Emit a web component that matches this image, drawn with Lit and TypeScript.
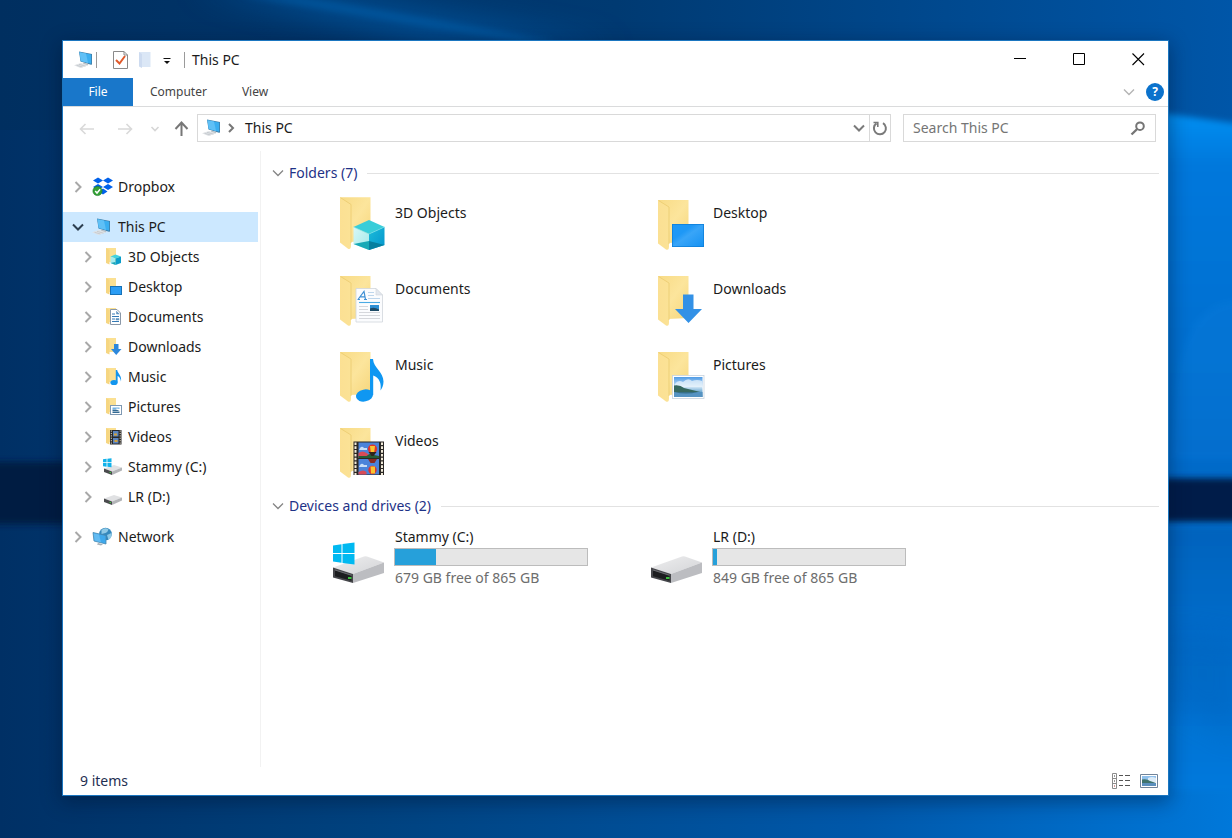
import { LitElement, html, css, svg } from "lit";
import { customElement, property, state } from "lit/decorators.js";
import { classMap } from "lit/directives/class-map.js";

type IconName =
  | "objects" | "desktop" | "documents" | "downloads" | "music"
  | "pictures" | "videos" | "drive-c" | "drive" | "pc" | "dropbox" | "network";

interface NavItem { label: string; icon: IconName; child?: boolean; open?: boolean; spaced?: boolean; }
interface Drive { label: string; icon: IconName; free: number; total: number; }

const navItems: NavItem[] = [
  { label: "Dropbox", icon: "dropbox" },
  { label: "This PC", icon: "pc", open: true, spaced: true },
  { label: "3D Objects", icon: "objects", child: true },
  { label: "Desktop", icon: "desktop", child: true },
  { label: "Documents", icon: "documents", child: true },
  { label: "Downloads", icon: "downloads", child: true },
  { label: "Music", icon: "music", child: true },
  { label: "Pictures", icon: "pictures", child: true },
  { label: "Videos", icon: "videos", child: true },
  { label: "Stammy (C:)", icon: "drive-c", child: true },
  { label: "LR (D:)", icon: "drive", child: true },
  { label: "Network", icon: "network", spaced: true },
];

const folders: { label: string; icon: IconName }[] = [
  { label: "3D Objects", icon: "objects" },
  { label: "Desktop", icon: "desktop" },
  { label: "Documents", icon: "documents" },
  { label: "Downloads", icon: "downloads" },
  { label: "Music", icon: "music" },
  { label: "Pictures", icon: "pictures" },
  { label: "Videos", icon: "videos" },
];

const drives: Drive[] = [
  { label: "Stammy (C:)", icon: "drive-c", free: 679, total: 865 },
  { label: "LR (D:)", icon: "drive", free: 849, total: 865 },
];

const gradients = svg`
  <defs>
    <linearGradient id="back" x1="0" y1="0" x2="1" y2="1">
      <stop offset="0" stop-color="#f8db86"></stop><stop offset=".5" stop-color="#fce59c"></stop><stop offset="1" stop-color="#f6d67c"></stop>
    </linearGradient>
    <linearGradient id="flap" x1="0" y1="0" x2="1" y2="0">
      <stop offset="0" stop-color="#fbe093"></stop><stop offset="1" stop-color="#fbe296"></stop>
    </linearGradient>
    <linearGradient id="blue" x1="0" y1="0" x2="1" y2="1">
      <stop offset="0" stop-color="#1e98f6"></stop><stop offset=".35" stop-color="#1e98f6"></stop>
      <stop offset=".5" stop-color="#39a5f8"></stop><stop offset="1" stop-color="#1491f2"></stop>
    </linearGradient>
    <linearGradient id="sky" x1="0" y1="0" x2="0" y2="1">
      <stop offset="0" stop-color="#4f9be6"></stop><stop offset=".5" stop-color="#cfe5f6"></stop>
      <stop offset=".7" stop-color="#7fb4d8"></stop><stop offset="1" stop-color="#2f6fa3"></stop>
    </linearGradient>
    <linearGradient id="lid" x1="0" y1="0" x2="1" y2="1">
      <stop offset="0" stop-color="#eeeeef"></stop><stop offset="1" stop-color="#d3d4d7"></stop>
    </linearGradient>
    <linearGradient id="cubeL" x1="0" y1="0" x2="1" y2="1">
      <stop offset="0" stop-color="#d9f8f6"></stop><stop offset="1" stop-color="#a2e9ea"></stop>
    </linearGradient>
    <linearGradient id="cubeR" x1="0" y1="0" x2="1" y2="1">
      <stop offset="0" stop-color="#1cbcd9"></stop><stop offset="1" stop-color="#0495cd"></stop>
    </linearGradient>
  </defs>`;

const folderShape = svg`
  <path d="M9 4H39.500V46L19 47Z" fill="url(#back)"></path>
  <path d="M9 4.500 20 11V50q0 5-3 3.500L9 47.500Z" fill="url(#flap)"></path>
  <path d="M9.500 4.500 20 11V48" stroke="#ebcb70" stroke-width=".8" fill="none"></path>`;

const cube = svg`
  <path d="M38 24 53.500 31 38 38 22.500 31Z" fill="#38cdd9"></path>
  <path d="M22.500 31 38 38V54L22.500 48Z" fill="url(#cubeL)"></path>
  <path d="M53.500 31 38 38V54L53.500 49Z" fill="url(#cubeR)"></path>
  <path d="M22.500 48 38 45V54Z" fill="#17a9b6"></path>
  <path d="M53.500 49 38 45V54Z" fill="#067f9f"></path>
  <path d="M22.500 31 38 38 53.500 31" fill="none" stroke="#7ae2e8" stroke-width=".6"></path>`;

const desk = svg`
  <rect x="23" y="28" width="32" height="23" fill="url(#blue)"></rect>
  <rect x="23.400" y="28.400" width="31.200" height="22.200" fill="none" stroke="#0f80da" stroke-width=".8"></rect>`;

const paper = svg`
  <path d="M25 16.500H45L51.500 23V50H25Z" fill="#fbfcfe" stroke="#d0d5dc" stroke-width=".8"></path>
  <path d="M45 16.500V23H51.500Z" fill="#e3e8ef" stroke="#d0d5dc" stroke-width=".6"></path>
  <path d="M27 27.500 33 19.500 34.500 27.500M29.500 24.800H34M26.500 27.500H29M33 27.500H36" fill="none" stroke="#3f90d4" stroke-width="1.200"></path>
  <path d="M37 20.500H43M37 23.500H43M37 26.500H49" stroke="#b7d1ea" stroke-width=".9"></path>
  <path d="M28 30.500H49" stroke="#4aaae4" stroke-width="1.100"></path>
  <path d="M28 34.500H37M28 37.500H37M28 40.500H49M28 43.500H49M28 46.500H49" stroke="#d0d3d8" stroke-width=".9"></path>
  <rect x="39" y="33" width="9" height="6" fill="#2c8fd4"></rect>
  <path d="M39 36.500q4-2 9 1V39H39Z" fill="#1d4a66"></path>`;

const arrow = svg`
  <path d="M34 22.500H44.500V37H53L39.500 51 26 37H34Z" fill="#3391e6"></path>`;

const note = svg`
  <ellipse cx="33.500" cy="47.500" rx="8.600" ry="6" transform="rotate(-12 33.500 47.500)" fill="#0f97f2"></ellipse>
  <path d="M39 11H42C42.500 20 52.500 24 52.500 33.500 52.500 37.500 51 40.500 49.500 42.500 50.500 35 48.500 30 42.200 27.500V47H39Z" fill="#0f97f2"></path>`;

const photo = svg`
  <rect x="23.500" y="27.500" width="31.500" height="23" fill="#fff" stroke="#c6d3df" stroke-width=".8"></rect>
  <rect x="25" y="29" width="28.500" height="20" fill="url(#sky)"></rect>
  <path d="M26 36q3-5 8-2 5-5 9-1 5-2 10 0v6H26Z" fill="#eef6fc" opacity=".7"></path>
  <path d="M25 37.500q6-1 10 2.500 8 2 18.500 4.500H25Z" fill="#35685f"></path>
  <path d="M25 44H53.500V49H25Z" fill="#5593c2"></path>
  <path d="M25 44q12 3 24 0Z" fill="#356f88"></path>`;

const film = svg`
  <rect x="22.500" y="17.500" width="30.500" height="33.500" fill="#2a2725"></rect>
  <path d="M24.500 18.500V51M51 18.500V51" stroke="#f1ead8" stroke-width="2" stroke-dasharray="2.600 1.200"></path>
  <rect x="27.500" y="18.500" width="20.500" height="15.500" fill="#4b83da"></rect>
  <rect x="27.500" y="35" width="20.500" height="15.500" fill="#4b83da"></rect>
  <path d="M27.500 29q4-3 8 0t5 2V34H27.500Z" fill="#d84b57"></path>
  <path d="M27.500 32h8l3-2 9.500 2v2H27.500Z" fill="#265c34"></path>
  <path d="M29 24q2-2.500 4 0h3v2h-8zM29 41q2-2.500 4 0h3v2h-8z" fill="#c8ddf7"></path>
  <circle cx="41.500" cy="25" r="4.600" fill="#e0342c"></circle>
  <path d="M39 22h5l-1 8h-3Z" fill="#f7c531"></path>
  <path d="M37.500 28h8l-3 4h-2Z" fill="#2e241c"></path>
  <path d="M37 35h9l-2.500 4h-4Z" fill="#8d2a21"></path>
  <path d="M27.500 48q5-3 8 0v2.500h-8Z" fill="#d84b57"></path>
  <circle cx="41.500" cy="46" r="4.200" fill="#e0342c"></circle>
  <path d="M39.500 42.500h4.500v7h-4Z" fill="#f7c531"></path>`;

const driveBody = svg`
  <path d="M2 27.500 33 16.500Q34.500 16 36 16.500L53 22.500 22 34Z" fill="url(#lid)"></path>
  <path d="M22 34 53 22.500V33L22 43Z" fill="#bcbdc1"></path>
  <path d="M2 27.500 22 34V43L2 37.500Z" fill="#45464a"></path>
  <path d="M4 30.200 20.500 35.500V40.800L4 36.200Z" fill="#1c1d1f"></path>
  <path d="M4 30 20.500 35.300" stroke="#77797d" stroke-width=".8"></path>
  <rect x="17" y="37" width="3.500" height="2" fill="#3cbf3f"></rect>`;

const winLogo = svg`
  <path d="M2 5.500 10.500 4.200V13H2ZM11.500 4 23.500 2.500V13H11.500ZM2 14H10.500V22.800L2 21.500ZM11.500 14H23.500V24.500L11.500 23Z" fill="#00b9f1"></path>`;

const large: Record<string, unknown> = {
  objects: svg`<g transform="translate(0 -3) scale(1 1.040)">${folderShape}</g>${cube}`,
  desktop: svg`${folderShape}${desk}`,
  documents: svg`${folderShape}${paper}`,
  downloads: svg`${folderShape}${arrow}`,
  music: svg`${folderShape}${note}`,
  pictures: svg`${folderShape}${photo}`,
  videos: svg`${folderShape}${film}`,
  "drive-c": svg`${driveBody}${winLogo}`,
  drive: driveBody,
};

const smallFolder = svg`
  <path d="M4 2H14V16H7Z" fill="#fbe092"></path>
  <path d="M4 2 7.500 4V18.500L4 17Z" fill="#f6d681"></path>`;
const smallDrive = svg`
  <path d="M2 12.500 12 9 20 11.500 10 15.500Z" fill="#e0e1e3"></path>
  <path d="M10 15.500 20 11.500V14.500L10 19Z" fill="#b3b5b8"></path>
  <path d="M2 12.500 10 15.500V19L2 16Z" fill="#4a4b4d"></path>
  <rect x="7.500" y="16" width="1.500" height="1" fill="#3ccf3f"></rect>`;

const small: Record<string, unknown> = {
  objects: svg`${smallFolder}
    <path d="M8.500 10.500 13.500 8.500 19 10.500 13.500 12.500Z" fill="#43d3df"></path>
    <path d="M8.500 10.500 13.500 12.500V19L8.500 17Z" fill="#a5ebee"></path>
    <path d="M19 10.500 13.500 12.500V19L19 17Z" fill="#0b9dca"></path>
    <path d="M8.500 17 13.500 16V19Z" fill="#18a5b8"></path>`,
  desktop: svg`${smallFolder}<rect x="8.500" y="10.500" width="11" height="8" fill="#2b9df4" stroke="#1672b8"></rect>`,
  documents: svg`${smallFolder}
    <path d="M8.500 3.500H15L18.500 7V18.500H8.500Z" fill="#fff" stroke="#8a98a8"></path>
    <path d="M10 8H13M10 10.500H17M10 13H13M10 15.500H17" stroke="#3479b5"></path>
    <path d="M14.500 5V8H17.500M14 12.500H17V14H14Z" fill="#5d91bf" stroke="#5d91bf" stroke-width=".5"></path>`,
  downloads: svg`${smallFolder}<path d="M12 8H16.500V13H19.500L14.200 19 9 13H12Z" fill="#2d88dc"></path>`,
  music: svg`${smallFolder}
    <ellipse cx="12" cy="16.500" rx="3.600" ry="2.600" fill="#1295ee"></ellipse>
    <path d="M13.800 4H15.200C15.500 7.500 20 9 19 15.500 18.500 12.500 17.500 11 15.600 10V16.500H13.800Z" fill="#1295ee"></path>`,
  pictures: svg`${smallFolder}
    <rect x="8.500" y="9.500" width="11" height="9" fill="#fff" stroke="#7e99b3"></rect>
    <path d="M10.500 11.500H17.500V13L15 12.500 10.500 14Z" fill="#6fb1e4"></path>
    <path d="M10.500 14q4-1.500 7 1H10.500ZM10.500 15.500h7V17h-7Z" fill="#326a94"></path>`,
  videos: svg`${smallFolder}
    <rect x="8" y="4" width="11.500" height="14.500" fill="#28282a"></rect>
    <path d="M9.300 4.500V18.500M18.200 4.500V18.500" stroke="#e8dfc8" stroke-dasharray="1.200 1.200"></path>
    <rect x="11" y="5" width="5.500" height="5.500" fill="#5a84c0"></rect>
    <rect x="11" y="12" width="5.500" height="5.500" fill="#5a84c0"></rect>
    <path d="M12 7.500h3v2h-3zM12.500 14h3v2h-3z" fill="#d4a13a"></path>`,
  "drive-c": svg`${smallDrive}
    <path d="M1 3.200 4.600 2.800V6.300H1ZM5.400 2.700 9.500 2.200V6.300H5.400ZM1 7.100H4.600V10.700L1 10.300ZM5.400 7.100H9.500V11.200L5.400 10.800Z" fill="#12b2ea"></path>`,
  drive: smallDrive,
  pc: svg`
    <path d="M5 2.500 18 5V15.500L17 15.800 6.500 12.500Z" fill="#3d7da8"></path>
    <path d="M5.500 3.200 17.200 5.500V14.700L6.800 12Z" fill="#3aaef0"></path>
    <path d="M5.500 3.200 12 4.500 14 13.900 6.800 12Z" fill="#5fc0f6"></path>
    <path d="M9.500 13.500 14.500 15 13.500 16.500 9 15Z" fill="#b9c0c6"></path>
    <path d="M0 16.300 7 14 14 16.300 6.500 19Z" fill="#dfe2e5"></path>
    <path d="M2.500 16.300 8.500 18M5 15.300 11.500 17.200" stroke="#c0c5ca" stroke-width=".8"></path>`,
  dropbox: svg`
    <path d="M6 1.500 11 4.500 6 7.500 1 4.500ZM16 1.500 21 4.500 16 7.500 11 4.500ZM6 8 11 11 6 14 1 11ZM16 8 21 11 16 14 11 11ZM11 12.500 15.500 15.500 11 18.500 6.500 15.500Z" fill="#0061ea"></path>
    <circle cx="5.500" cy="15" r="4.600" fill="#33a035" stroke="#1c7c26" stroke-width=".6"></circle>
    <path d="M3.200 15 5 17 8.100 13.300" fill="none" stroke="#fff" stroke-width="1.500"></path>`,
  network: svg`
    <circle cx="13.500" cy="8" r="6.300" fill="#3589bd"></circle>
    <path d="M9.500 4q3.500-3 7-.5-1 3-3 3.500T9.500 8ZM15 9l4.500-2q1 4-3 7Z" fill="#8fc9e6"></path>
    <path d="M1 6.500 14 9.500V18L2 15Z" fill="#3fa9ec" stroke="#4787ae" stroke-width=".8"></path>
    <path d="M1.800 7.400 7 8.600 9 16.200 2.600 14.500Z" fill="#62bbf2"></path>
    <path d="M6 17 11 18.200 9 19.500 5 18.500Z" fill="#a5b0b8"></path>`,
};

@customElement("shell-icon")
class ShellIcon extends LitElement {
  @property() name: IconName = "drive";
  @property({ type: Boolean, reflect: true }) big = false;

  static styles = css`
    :host { display: block; flex: none; width: 22px; height: 22px; }
    :host([big]) { width: 56px; height: 56px; }
    svg { display: block; width: 100%; height: 100%; overflow: visible; }
  `;

  render() {
    return this.big
      ? html`<svg viewBox="0 0 56 56" aria-hidden="true">${gradients}${large[this.name]}</svg>`
      : html`<svg viewBox="0 0 22 22" aria-hidden="true">${small[this.name]}</svg>`;
  }
}

@customElement("desk-wallpaper")
class DeskWallpaper extends LitElement {
  static styles = css`
    :host { display: block; }
    svg { display: block; width: 100%; height: 100%; }
  `;

  render() {
    return html`
      <svg viewBox="0 0 1232 838" preserveAspectRatio="none" aria-hidden="true">
        <defs>
          <linearGradient id="base" x1="0" y1="0" x2="1" y2="0">
            <stop offset="0" stop-color="#003065"></stop>
            <stop offset=".3" stop-color="#00427f"></stop>
            <stop offset=".7" stop-color="#0058aa"></stop>
            <stop offset="1" stop-color="#0078da"></stop>
          </linearGradient>
          <linearGradient id="top" x1="0" y1="0" x2="1" y2="0">
            <stop offset="0" stop-color="#002f60"></stop>
            <stop offset=".5" stop-color="#003a72"></stop>
            <stop offset="1" stop-color="#0056a8"></stop>
          </linearGradient>
          <linearGradient id="pane" x1="0" y1="0" x2="0" y2="1">
            <stop offset="0" stop-color="#0090f2"></stop>
            <stop offset=".15" stop-color="#0078dc"></stop>
            <stop offset="1" stop-color="#006ac8"></stop>
          </linearGradient>
          <linearGradient id="floor" x1="0" y1="0" x2="0" y2="1">
            <stop offset="0" stop-color="#0063bd"></stop>
            <stop offset="1" stop-color="#0079dc"></stop>
          </linearGradient>
          <filter id="soft" x="-20%" y="-50%" width="140%" height="200%"><feGaussianBlur stdDeviation="3"></feGaussianBlur></filter>
          <filter id="haze" x="-20%" y="-50%" width="140%" height="200%"><feGaussianBlur stdDeviation="14"></feGaussianBlur></filter>
        </defs>
        <rect width="1232" height="838" fill="url(#base)"></rect>
        <rect width="1232" height="130" fill="url(#top)"></rect>
        <path d="M190 -10 330 -10 620 45 430 45Z" fill="#0061b0" opacity=".5" filter="url(#haze)"></path>
        <path d="M240 -4 300 -4 560 42 520 42Z" fill="#0068b8" opacity=".4" filter="url(#soft)"></path>
        <path d="M1140 110 1240 124V478H1140Z" fill="url(#pane)" filter="url(#soft)"></path>
        <path d="M1174 400Q1180 300 1240 300V460H1170Z" fill="#1a8cec" opacity=".14" filter="url(#soft)"></path>
        <path d="M1140 526H1240V790H1140Z" fill="url(#floor)" filter="url(#soft)"></path>
        <path d="M1165 630 1240 640V740L1165 700Z" fill="#005cb2" opacity=".3" filter="url(#haze)"></path>
        <path d="M-10 462H80V524H-10Z" fill="#001d42" filter="url(#soft)"></path>
        <path d="M1140 478H1240V522H1140Z" fill="#001f48" filter="url(#soft)"></path>
      </svg>`;
  }
}

@customElement("app-root")
class AppRoot extends LitElement {
  @state() private selected = "This PC";

  static styles = css`
    :host {
      display: block;
      position: relative;
      box-sizing: border-box;
      min-height: 100vh;
      padding: 41px 64px 43px 63px;
      font-family: "Noto Sans", "Open Sans", sans-serif;
      font-size: 14px;
      line-height: 20px;
      color: #1b1b1b;
    }
    *, *::before { box-sizing: border-box; }
    button, input { font: inherit; color: inherit; border: 0; padding: 0; margin: 0; background: none; }
    a { color: inherit; text-decoration: none; }
    ul, h2 { margin: 0; padding: 0; list-style: none; font-size: inherit; font-weight: 400; }
    svg { display: block; flex: none; fill: none; }
    .wall { position: absolute; inset: 0; }
    .window {
      position: relative;
      display: flex;
      flex-direction: column;
      min-height: calc(100vh - 84px);
      background: #fff;
      outline: 1px solid #1b76c0;
      box-shadow: 0 5px 18px 2px rgba(0, 15, 40, .4);
    }
    .title { display: flex; align-items: stretch; height: 37px; }
    .quick { display: flex; align-items: center; flex: 1; padding-left: 11px; }
    .rule { width: 1px; height: 16px; background: #9a9a9a; }
    .check { margin-left: 15px; }
    .blank { margin-left: 9px; }
    .more { margin: 0 10px 0 8px; }
    .caption { padding-left: 7px; }
    .control { width: 59px; display: flex; align-items: center; justify-content: center; }
    .ribbon { display: flex; align-items: stretch; height: 29px; border-bottom: 1px solid #dadbdc; font-size: 12px; color: #444; }
    .tab { padding: 0 18px 0 17px; }
    .file { width: 70px; padding: 0; background: #1977ca; color: #fff; height: 28px; }
    .push { flex: 1; }
    .help { display: flex; align-items: center; gap: 11px; padding-right: 4px; }
    .mark { width: 18px; height: 18px; border-radius: 50%; background: #0b72cc; color: #fff; font-size: 12px; line-height: 18px; font-weight: 700; text-align: center; }
    .nav { display: flex; align-items: center; padding: 7px 12px 9px 5px; }
    .step { display: flex; align-items: center; justify-content: center; height: 28px; width: 38px; }
    .step.slim { width: 22px; }
    .step.up { width: 31px; }
    .address, .search { display: flex; align-items: center; height: 28px; border: 1px solid #d9d9d9; }
    .address { flex: 1; padding-left: 4px; margin-right: 12px; }
    .crumb { margin: 0 8px 0 3px; }
    .drop { width: 21px; height: 26px; display: flex; align-items: center; justify-content: center; }
    .reload { border-left: 1px solid #d9d9d9; }
    .search { width: 253px; padding: 0 9px; }
    .search input { flex: 1; min-width: 0; outline: none; }
    .search input::placeholder { color: #757575; opacity: 1; }
    .body { display: flex; flex: 1; }
    .tree { width: 198px; flex: none; padding: 21px 2px 0 0; border-right: 1px solid #f2f2f2; }
    .row { display: flex; align-items: center; height: 30px; padding-left: 7px; }
    .row.spaced { margin-top: 10px; }
    .row.child { padding-left: 17px; }
    .row.current { background: #cce8ff; }
    .twist { width: 16px; height: 16px; margin-right: 6px; display: flex; align-items: center; justify-content: center; }
    .link { display: flex; align-items: center; gap: 4px; flex: 1; }
    .main { flex: 1; padding: 12px 9px 0 11px; }
    .group { display: flex; align-items: center; gap: 5px; height: 20px; color: #1e3287; }
    .group::after { content: ""; flex: 1; height: 1px; margin-left: 5px; background: #e2e2e2; }
    .tiles { display: grid; grid-template-columns: repeat(auto-fill, 318px); padding: 9px 0 0 59px; }
    .tiles.disks { padding-top: 11px; }
    .tile { display: flex; gap: 8px; height: 76px; padding-top: 4px; }
    .name { padding-top: 7px; }
    .disk { display: flex; gap: 7px; height: 76px; }
    .art { padding-top: 13px; }
    .meter { width: 194px; height: 18px; margin: 1px 0 2px; border: 1px solid #bcbcbc; background: #e6e6e6; }
    .used { height: 100%; background: #26a0da; }
    .text { padding-left: 1px; }
    .free { color: #6d6d6d; }
    .status { display: flex; align-items: center; height: 28px; padding: 0 10px 0 17px; color: #1f2f52; }
    .views { display: flex; align-items: center; gap: 9px; }
  `;

  private chevron(dir: "down" | "right", color: string, width = 2) {
    return dir === "down"
      ? html`<svg width="12" height="12" viewBox="0 0 12 12" aria-hidden="true"><path d="M1 3.500 6 8.500 11 3.500" stroke=${color} stroke-width=${width}></path></svg>`
      : html`<svg width="12" height="12" viewBox="0 0 12 12" aria-hidden="true"><path d="M3.500 1 8.500 6 3.500 11" stroke=${color} stroke-width=${width}></path></svg>`;
  }

  private renderTitle() {
    return html`
      <header class="title">
        <div class="quick">
          <shell-icon name="pc"></shell-icon>
          <span class="rule"></span>
          <button class="check" aria-label="Properties">
            <svg width="17" height="20" viewBox="0 0 17 20">
              <path d="M1.500 1.500H12L15.500 5V18.500H1.500Z" fill="#fff" stroke="#8a8a8a"></path>
              <path d="M12 1.500V5H15.500" stroke="#8a8a8a"></path>
              <path d="M4 10 7.500 13.500 13 6" stroke="#e0592a" stroke-width="2"></path>
            </svg>
          </button>
          <button class="blank" aria-label="New folder">
            <svg width="14" height="18" viewBox="0 0 14 18">
              <path d="M1 1H12.500V16H3Z" fill="#dbe7f6"></path>
              <path d="M1 1 4 3V17L1 15.500Z" fill="#cddbf0"></path>
            </svg>
          </button>
          <button class="more" aria-label="Customize quick access toolbar">
            <svg width="14" height="12" viewBox="0 0 14 12"><path d="M3.500 4.500H10.500" stroke="#111"></path><path d="M4 7H10L7 10Z" fill="#111"></path></svg>
          </button>
          <span class="rule"></span>
          <span class="caption">This PC</span>
        </div>
        <button class="control" aria-label="Minimize"><svg width="13" height="13" viewBox="0 0 13 13"><path d="M0 5.500H12" stroke="#000"></path></svg></button>
        <button class="control" aria-label="Maximize"><svg width="13" height="13" viewBox="0 0 13 13"><path d="M.5 .5H11.500V11.500H.5Z" stroke="#000"></path></svg></button>
        <button class="control" aria-label="Close"><svg width="13" height="13" viewBox="0 0 13 13"><path d="M.5 .5 12 12M12 .5 .5 12" stroke="#000" stroke-width="1.100"></path></svg></button>
      </header>
      <div class="ribbon">
        <button class="tab file">File</button>
        <button class="tab">Computer</button>
        <button class="tab">View</button>
        <span class="push"></span>
        <div class="help">
          <button aria-label="Expand the ribbon">${this.chevron("down", "#b4b4b4", 1.4)}</button>
          <button class="mark" aria-label="Help">?</button>
        </div>
      </div>`;
  }

  private renderNav() {
    return html`
      <div class="nav">
        <button class="step" aria-label="Back"><svg width="16" height="14" viewBox="0 0 16 14"><path d="M15 8H1.500M6.500 3 1.500 8 6.500 13" stroke="#d9d9d9" stroke-width="1.600"></path></svg></button>
        <button class="step" aria-label="Forward"><svg width="16" height="14" viewBox="0 0 16 14"><path d="M1 8H14.500M9.500 3 14.500 8 9.500 13" stroke="#d9d9d9" stroke-width="1.600"></path></svg></button>
        <button class="step slim" aria-label="Recent locations"><svg width="10" height="10" viewBox="0 0 10 10"><path d="M1.500 4 5 7.500 8.500 4" stroke="#d6d6d6" stroke-width="1.600"></path></svg></button>
        <button class="step up" aria-label="Up"><svg width="16" height="16" viewBox="0 0 16 16"><path d="M7.500 16V3M1.500 9 7.500 2.500 13.500 9" stroke="#777" stroke-width="2"></path></svg></button>
        <div class="address">
          <shell-icon name="pc"></shell-icon>
          <span class="crumb"><svg width="10" height="12" viewBox="0 0 10 12"><path d="M2 2 6 6 2 10" stroke="#777" stroke-width="2"></path></svg></span>
          <a href="#this-pc">This PC</a>
          <span class="push"></span>
          <button class="drop" aria-label="Previous locations">${this.chevron("down", "#7a7a7a", 2)}</button>
          <button class="drop reload" aria-label="Refresh">
            <svg width="16" height="16" viewBox="0 0 16 16"><path d="M11 3.200A6 6 0 1 1 4.500 3.400" stroke="#7a7a7a" stroke-width="2"></path><path d="M1.500 2.500H5.800V7" stroke="#7a7a7a" stroke-width="1.600"></path></svg>
          </button>
        </div>
        <div class="search">
          <input type="search" aria-label="Search This PC" placeholder="Search This PC" />
          <svg width="16" height="16" viewBox="0 0 16 16" aria-hidden="true"><circle cx="10" cy="6.200" r="3.800" stroke="#757575" stroke-width="2"></circle><path d="M7.200 9 1.500 14.500" stroke="#757575" stroke-width="2.400"></path></svg>
        </div>
      </div>`;
  }

  private renderTree() {
    return html`
      <nav class="tree" aria-label="Locations">
        <ul>
          ${navItems.map((item) => html`
            <li class=${classMap({ row: true, child: !!item.child, spaced: !!item.spaced, current: item.label === this.selected })}>
              <button class="twist" aria-label=${`Expand ${item.label}`}>
                ${item.open ? this.chevron("down", "#2c3e50") : this.chevron("right", "#a8a8a8")}
              </button>
              <a class="link" href="#" @click=${(e: Event) => { e.preventDefault(); this.selected = item.label; }}>
                <shell-icon name=${item.icon}></shell-icon>
                <span>${item.label}</span>
              </a>
            </li>`)}
        </ul>
      </nav>`;
  }

  private renderMain() {
    return html`
      <main class="main">
        <h2 class="group">${this.chevron("down", "#858585", 1.3)}<span>Folders (${folders.length})</span></h2>
        <div class="tiles">
          ${folders.map((f) => html`
            <a class="tile" href="#">
              <shell-icon big name=${f.icon}></shell-icon>
              <span class="name">${f.label}</span>
            </a>`)}
        </div>
        <h2 class="group">${this.chevron("down", "#858585", 1.3)}<span>Devices and drives (${drives.length})</span></h2>
        <div class="tiles disks">
          ${drives.map((d) => html`
            <a class="disk" href="#">
              <div class="art"><shell-icon big name=${d.icon}></shell-icon></div>
              <div>
                <div class="text">${d.label}</div>
                <div class="meter"><div class="used" style="width: ${((d.total - d.free) / d.total) * 100}%"></div></div>
                <div class="text free">${d.free} GB free of ${d.total} GB</div>
              </div>
            </a>`)}
        </div>
      </main>`;
  }

  render() {
    return html`
      <desk-wallpaper class="wall"></desk-wallpaper>
      <div class="window">
        ${this.renderTitle()}
        ${this.renderNav()}
        <div class="body">${this.renderTree()}${this.renderMain()}</div>
        <footer class="status">
          <span>${folders.length + drives.length} items</span>
          <span class="push"></span>
          <div class="views">
            <button aria-label="Details view">
              <svg width="20" height="16" viewBox="0 0 20 16">
                <path d="M1.500 .5H5.500V15.500H1.500ZM1.500 5.500H5.500M1.500 10.500H5.500" stroke="#8b8b8b"></path>
                <path d="M3 3H4M3 8H4" stroke="#333"></path><path d="M3 13H4" stroke="#a33"></path>
                <path d="M8 2.500H12M14 2.500H19M8 7.500H12M14 7.500H19M8 12.500H12M14 12.500H19" stroke="#555"></path>
              </svg>
            </button>
            <button aria-label="Large icons view">
              <svg width="18" height="14" viewBox="0 0 18 14">
                <path d="M.5 .5H17.500V13.500H.5Z" fill="#fff" stroke="#71849a"></path>
                <path d="M2 2H16V8H2Z" fill="#8fc0ec"></path><path d="M8 4q4-2 8 0v4H8z" fill="#dcebf7"></path>
                <path d="M2 5.500q5-1 8 1.500l6 2H2Z" fill="#3f736c"></path><path d="M2 9H16V12H2Z" fill="#5b8fbd"></path>
              </svg>
            </button>
          </div>
        </footer>
      </div>`;
  }
}
